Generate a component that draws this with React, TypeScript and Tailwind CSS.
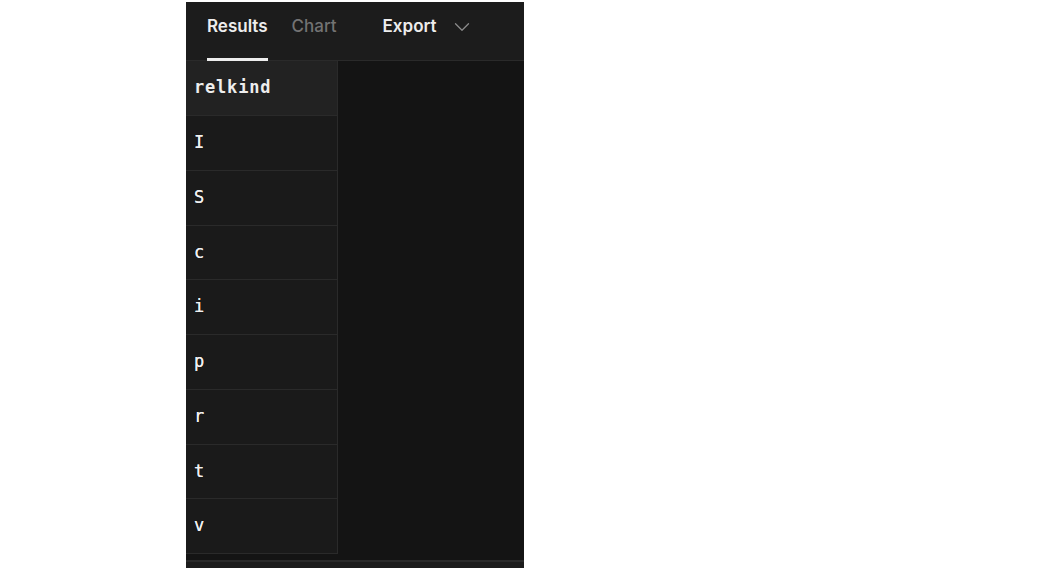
import { ChevronDown } from "lucide-react";

const rows = ["I", "S", "c", "i", "p", "r", "t", "v"];

export default function App() {
  return (
    <div className="flex h-[568px] w-[1039px] bg-white">
      <div className="ml-[186px] mt-[2px] flex w-[338px] flex-col bg-[#141414]">
        {/* tabs */}
        <div className="flex h-[59px] shrink-0 items-stretch border-b border-[#2a2a2a] bg-[#1c1c1c] pl-[21px] font-['Inter',sans-serif] text-[17px] font-semibold">
          <div className="relative flex items-center pb-[9px] text-[#ededed]">
            Results
            <span className="absolute bottom-[-1px] left-0 right-0 h-[3px] bg-[#ededed]" />
          </div>
          <div className="ml-[24px] flex items-center pb-[9px] font-medium text-[#737373]">Chart</div>
          <div className="ml-[46px] flex items-center gap-[12px] pb-[9px] text-[#ededed]">
            Export
            <ChevronDown size={26} strokeWidth={1.2} className="text-[#8a8a8a]" />
          </div>
        </div>

        {/* grid */}
        <div className="flex min-h-0 flex-1 flex-col">
          <div className="w-[152px] border-r border-[#2a2a2a] font-['DejaVu_Sans_Mono',monospace] text-[17px] tracking-[0.8px]">
            <div className="flex h-[55px] items-center border-b border-[#2a2a2a] bg-[#222222] pl-[8px] font-bold text-[#ededed]">
              relkind
            </div>
            {rows.map((r) => (
              <div
                key={r}
                className="flex h-[54.75px] items-center border-b border-[#2a2a2a] bg-[#1a1a1a] pl-[8px] text-[#f0f0f0] [text-shadow:0_0_0.4px_#f0f0f0]"
              >
                {r}
              </div>
            ))}
          </div>
          <div className="flex-1" />
          <div className="h-[8px] shrink-0 border-t-2 border-[#2a2a2a] bg-[#1c1c1c]" />
        </div>
      </div>
    </div>
  );
}
